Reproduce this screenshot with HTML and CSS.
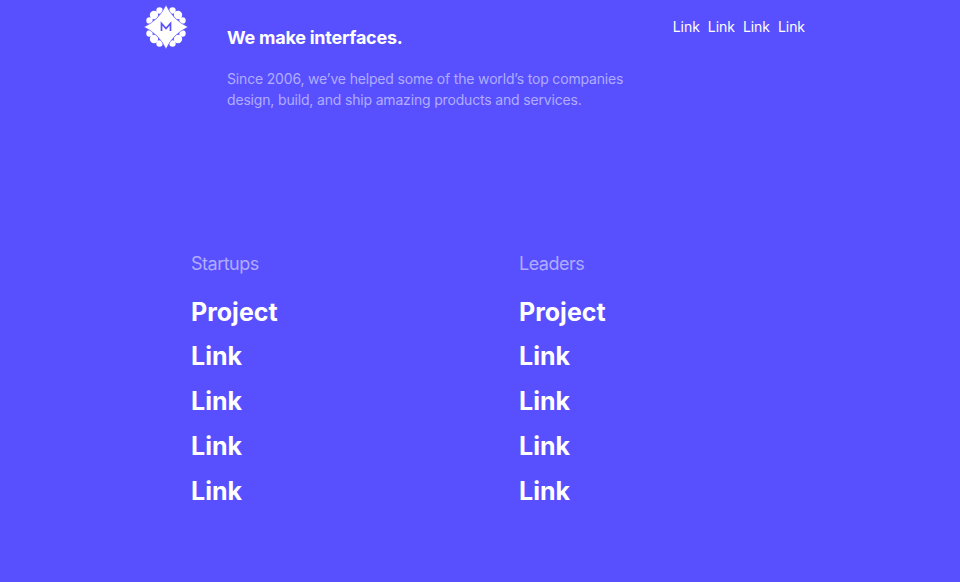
FILE: index.html
```html
<!DOCTYPE html>
<html lang="en">
<head>
    <meta charset="UTF-8">
    <meta name="viewport" content="width=device-width, initial-scale=1.0">
    <title>We make interfaces.</title>
    <link rel="stylesheet" href="styles.css">
</head>
<body>

<header class="top">
    <a class="logo" href="#" aria-label="Home">
        <svg width="44" height="44" viewBox="0 0 44 44">
            <g fill="#fff">
                <circle cx="28.500" cy="5.500" r="3.200"/>
                <circle cx="34" cy="10" r="4.200"/>
                <circle cx="38.500" cy="15.500" r="3.200"/>
                <circle cx="15.500" cy="5.500" r="3.200"/>
                <circle cx="10" cy="10" r="4.200"/>
                <circle cx="5.500" cy="15.500" r="3.200"/>
                <circle cx="28.500" cy="38.500" r="3.200"/>
                <circle cx="34" cy="34" r="4.200"/>
                <circle cx="38.500" cy="28.500" r="3.200"/>
                <circle cx="15.500" cy="38.500" r="3.200"/>
                <circle cx="10" cy="34" r="4.200"/>
                <circle cx="5.500" cy="28.500" r="3.200"/>
                <path d="M22 0 Q29 15 44 22 Q29 29 22 44 Q15 29 0 22 Q15 15 22 0Z" stroke="#5850ff" stroke-width="0.600"/>
            </g>
            <path d="M17.500 26 V18.500 L22 23.500 L26.500 18.500 V26" fill="none" stroke="#5850ff" stroke-width="1.700"/>
        </svg>
    </a>
    <div class="intro">
        <h1>We make interfaces.</h1>
        <p>Since 2006, we’ve helped some of the world’s top companies<br>design, build, and ship amazing products and services.</p>
    </div>
    <nav class="top-nav">
        <a href="#">Link</a>
        <a href="#">Link</a>
        <a href="#">Link</a>
        <a href="#">Link</a>
    </nav>
</header>

<main class="work">
    <section class="work-col">
        <h2>Startups</h2>
        <a href="#">Project</a>
        <a href="#">Link</a>
        <a href="#">Link</a>
        <a href="#">Link</a>
        <a href="#">Link</a>
    </section>
    <section class="work-col">
        <h2>Leaders</h2>
        <a href="#">Project</a>
        <a href="#">Link</a>
        <a href="#">Link</a>
        <a href="#">Link</a>
        <a href="#">Link</a>
    </section>
</main>

</body>
</html>
```

FILE: styles.css
```css
body { background-color: #5850ff; color: white; font-family: Inter, Arial, sans-serif; margin: 0; }
a { color: white; text-decoration: none; }
.top { display: flex; padding: 5px 155px 0 144px; }
.logo { display: block; width: 44px; height: 44px; margin-right: 39px; }
.intro { flex: 1; padding-top: 21px; }
.intro h1 { font-size: 18px; line-height: 24px; font-weight: 700; letter-spacing: -0.25px; margin: 0 0 18px; }
.intro p { color: #b0acff; font-size: 14px; line-height: 21px; letter-spacing: -0.17px; margin: 0; }
.top-nav { display: flex; gap: 8px; padding-top: 12px; font-size: 14px; line-height: 20px; letter-spacing: -0.05px; }
.work { display: flex; padding: 142px 0 0 191px; }
.work-col { display: flex; flex-direction: column; align-items: flex-start; width: 328px; }
.work-col h2 { color: #b0acff; font-size: 18px; line-height: 24px; font-weight: 400; letter-spacing: -0.5px; margin: 0 0 13.600px; }
.work-col a { font-size: 25px; line-height: 44.800px; font-weight: 700; }
```
